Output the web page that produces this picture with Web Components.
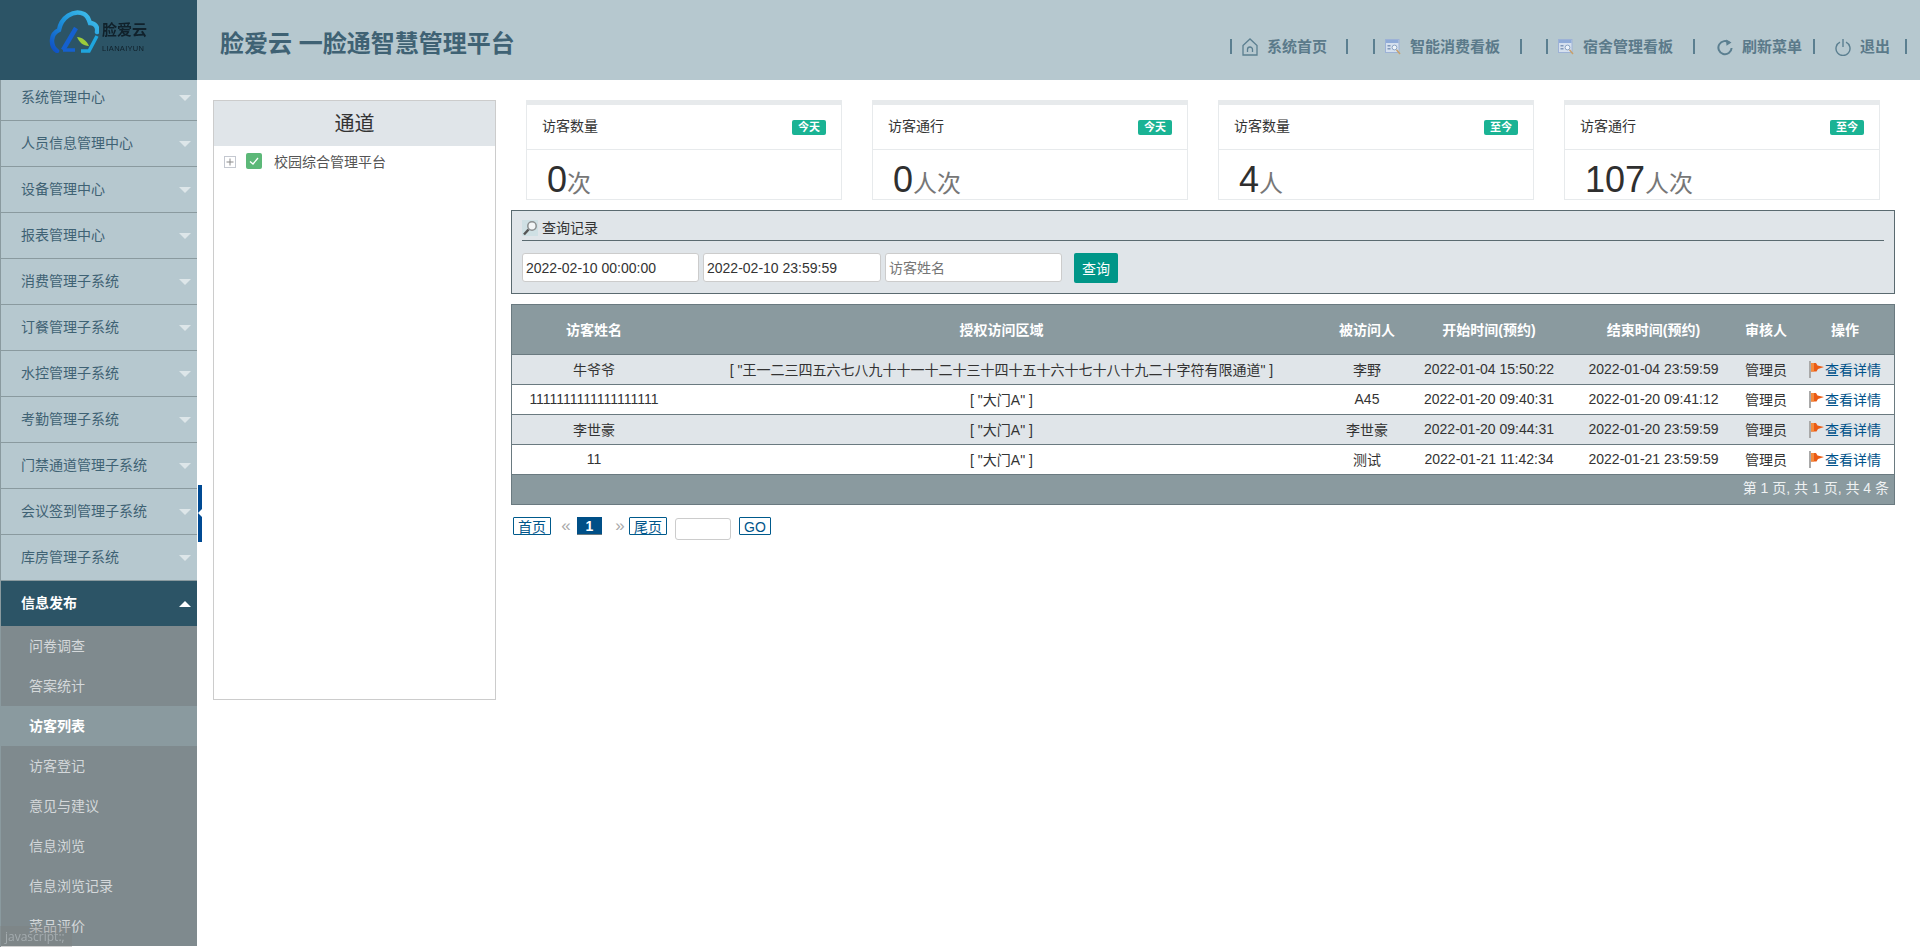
<!DOCTYPE html>
<html lang="zh-CN">
<head>
<meta charset="utf-8">
<title>脸爱云 一脸通智慧管理平台</title>
<style>
	html, body {
		margin: 0;
		height: 100%;
		overflow: hidden;
		background: #fff;
		font-family: "Liberation Sans", "Noto Sans CJK SC", sans-serif;
		font-size: 14px;
		color: #333;
	}
</style>
</head>
<body>
<app-shell>
	<app-header slot="header">
		<nav-link lead="0" tail="19">
			<svg slot="icon" width="16" height="18" viewBox="0 0 16 18" fill="none" stroke="#5b7f90" stroke-width="1.3"><path d="M1 7.500 8 1l7 6.500V17H1z"/><path d="M5.500 14v-2.500a2.500 2.500 0 0 1 5 0V14"/></svg>
			系统首页
		</nav-link>
		<nav-link lead="25" tail="20">
			<svg slot="icon" width="16" height="16" viewBox="0 0 16 16"><rect x="0.500" y="0.500" width="13.500" height="13" fill="#d5e0ee" stroke="#9db2d6"/><rect x="1" y="1" width="12.500" height="3" fill="#8fabd8"/><rect x="2.500" y="6" width="3" height="1.500" fill="#7f96b8"/><rect x="2.500" y="9" width="3" height="1.500" fill="#7f96b8"/><circle cx="9.500" cy="8.500" r="2.400" fill="#eef4fa" stroke="#8aa3c4"/><path d="M11.500 10.800 15 15" stroke="#c9a06a" stroke-width="1.500"/></svg>
			智能消费看板
		</nav-link>
		<nav-link lead="24" tail="20">
			<svg slot="icon" width="16" height="16" viewBox="0 0 16 16"><rect x="0.500" y="0.500" width="13.500" height="13" fill="#d5e0ee" stroke="#9db2d6"/><rect x="1" y="1" width="12.500" height="3" fill="#8fabd8"/><rect x="2.500" y="6" width="3" height="1.500" fill="#7f96b8"/><rect x="2.500" y="9" width="3" height="1.500" fill="#7f96b8"/><circle cx="9.500" cy="8.500" r="2.400" fill="#eef4fa" stroke="#8aa3c4"/><path d="M11.500 10.800 15 15" stroke="#c9a06a" stroke-width="1.500"/></svg>
			宿舍管理看板
		</nav-link>
		<nav-link lead="12" tail="11" nosep>
			<svg slot="icon" width="16" height="18" viewBox="0 0 16 18" fill="none" stroke="#5b7f90" stroke-width="2"><path d="M12.500 4.800A6.600 6.600 0 1 0 14.600 10"/><path d="M9 1.500l5.500 3-5 3.200z" fill="#5b7f90" stroke="none"/></svg>
			刷新菜单
		</nav-link>
		<nav-link lead="10" tail="15" nosep>
			<svg slot="icon" width="16" height="18" viewBox="0 0 16 18" fill="none" stroke="#5b7f90" stroke-width="1.400"><path d="M5 4.200A7 7 0 1 0 11 4.200"/><path d="M8 1v8"/></svg>
			退出
		</nav-link>
	</app-header>

	<side-menu slot="side">
		<menu-item>系统管理中心</menu-item>
		<menu-item>人员信息管理中心</menu-item>
		<menu-item>设备管理中心</menu-item>
		<menu-item>报表管理中心</menu-item>
		<menu-item>消费管理子系统</menu-item>
		<menu-item>订餐管理子系统</menu-item>
		<menu-item>水控管理子系统</menu-item>
		<menu-item>考勤管理子系统</menu-item>
		<menu-item>门禁通道管理子系统</menu-item>
		<menu-item>会议签到管理子系统</menu-item>
		<menu-item>库房管理子系统</menu-item>
		<menu-item open>信息发布</menu-item>
		<sub-item>问卷调查</sub-item>
		<sub-item>答案统计</sub-item>
		<sub-item active>访客列表</sub-item>
		<sub-item>访客登记</sub-item>
		<sub-item>意见与建议</sub-item>
		<sub-item>信息浏览</sub-item>
		<sub-item>信息浏览记录</sub-item>
		<sub-item>菜品评价</sub-item>
	</side-menu>

	<tree-panel slot="tree" heading="通道">校园综合管理平台</tree-panel>

	<stat-row slot="main">
		<stat-card label="访客数量" tag="今天" value="0" unit="次"></stat-card>
		<stat-card label="访客通行" tag="今天" value="0" unit="人次"></stat-card>
		<stat-card label="访客数量" tag="至今" value="4" unit="人"></stat-card>
		<stat-card label="访客通行" tag="至今" value="107" unit="人次"></stat-card>
	</stat-row>
	<query-panel slot="main"></query-panel>
	<visitor-table slot="main"></visitor-table>
	<page-bar slot="main"></page-bar>
</app-shell>
<link-tip>javascript:;</link-tip>

<script>
class AppShell extends HTMLElement {
	constructor() {
		super();
		this.attachShadow({ mode: 'open' });
		this.shadowRoot.innerHTML = `
			<style>
				:host {
					display: flex;
					flex-direction: column;
					height: 947px;
					overflow: hidden;
				}
				.body {
					display: flex;
					flex: 1;
					min-height: 0;
					position: relative;
				}
				.tree-col {
					margin: 20px 0 0 16px;
					flex: none;
				}
				.main-col {
					margin: 20px 25px 0 15px;
					flex: 1;
					min-width: 0;
					display: flex;
					flex-direction: column;
				}
				.handle {
					position: absolute;
					left: 198px;
					top: 405px;
					width: 4px;
					height: 57px;
					background: #004a93;
				}
				.handle::after {
					content: '';
					position: absolute;
					left: 0;
					top: 24px;
					border: 4px solid transparent;
					border-left: 0;
					border-right: 4px solid #fff;
				}
			</style>
			<slot name="header"></slot>
			<div class="body">
				<slot name="side"></slot>
				<div class="handle"></div>
				<div class="tree-col"><slot name="tree"></slot></div>
				<div class="main-col"><slot name="main"></slot></div>
			</div>
		`;
	}
}

class AppHeader extends HTMLElement {
	constructor() {
		super();
		this.attachShadow({ mode: 'open' });
		this.shadowRoot.innerHTML = `
			<style>
				:host {
					display: flex;
					flex: none;
					height: 80px;
					background: #b6c8cf;
				}
				.logo {
					width: 197px;
					flex: none;
					background: #2c5466;
					display: flex;
					align-items: flex-start;
					padding: 10px 0 0 49px;
					box-sizing: border-box;
				}
				.logo-text {
					margin: 11px 0 0 3px;
					color: #10212b;
					display: flex;
					flex-direction: column;
					filter: blur(.3px);
				}
				.logo-name {
					font-size: 15px;
					line-height: 17px;
					font-weight: 700;
				}
				.logo-en {
					font-size: 7.500px;
					line-height: 8px;
					margin-top: 7px;
					letter-spacing: .3px;
				}
				h1 {
					margin: 0 0 0 23px;
					font-size: 24px;
					font-weight: 700;
					line-height: 88px;
					color: #3f6274;
				}
				nav {
					margin-left: auto;
					padding: 39px 13px 0 0;
					display: flex;
					align-items: flex-start;
					height: 15px;
				}
			</style>
			<div class="logo">
				<svg width="50" height="43" viewBox="0 0 50 43" fill="none">
					<defs>
						<linearGradient id="cloud" x1="0" y1="1" x2="1" y2="0">
							<stop offset="0" stop-color="#0f4fc4"/>
							<stop offset=".55" stop-color="#1f96dc"/>
							<stop offset="1" stop-color="#46c6ee"/>
						</linearGradient>
					</defs>
					<path d="M8 41C1 36 1 24 10 20 12 8 24-1 35 4c4 2 5 6 6 9 5 0 8 4 7 9" stroke="url(#cloud)" stroke-width="4.500" stroke-linecap="round"/>
					<path d="M14 40 27 18" stroke="#1560cf" stroke-width="4.500"/>
					<path d="M14 40H26" stroke="#1560cf" stroke-width="3.500"/>
					<path d="M28 27c5 0 10 4 12 9-6 0-10-4-12-9z" fill="#9ccb3b"/>
					<path d="M48 26 40 41H32" stroke="#1fa5de" stroke-width="3.500"/>
				</svg>
				<div class="logo-text">
					<span class="logo-name">脸爱云</span>
					<span class="logo-en">LIANAIYUN</span>
				</div>
			</div>
			<h1>脸爱云 一脸通智慧管理平台</h1>
			<nav><slot></slot></nav>
		`;
	}
}

class NavLink extends HTMLElement {
	constructor() {
		super();
		this.attachShadow({ mode: 'open' });
		const nosep = this.hasAttribute('nosep');
		this.shadowRoot.innerHTML = `
			<style>
				:host {
					display: flex;
					align-items: center;
					height: 15px;
					color: #5b7a8a;
					font-size: 15px;
					font-weight: 700;
					white-space: nowrap;
				}
				.sep {
					width: 2px;
					height: 15px;
					background: #5b7f90;
					flex: none;
				}
				.icon {
					display: flex;
					width: 16px;
					margin: 0 9px 0 10px;
				}
				.icon ::slotted(svg) {
					flex: none;
				}
				.label {
					margin-bottom: 2px;
				}
			</style>
			${nosep ? '' : '<span class="sep"></span>'}
			<span class="icon"><slot name="icon"></slot></span>
			<span class="label"><slot></slot></span>
			<span class="sep end"></span>
		`;
		this.style.marginLeft = this.getAttribute('lead') + 'px';
		this.shadowRoot.querySelector('.end').style.marginLeft = this.getAttribute('tail') + 'px';
	}
}

class SideMenu extends HTMLElement {
	constructor() {
		super();
		this.attachShadow({ mode: 'open' });
		this.shadowRoot.innerHTML = `
			<style>
				:host {
					display: block;
					flex: none;
					width: 197px;
					box-sizing: border-box;
					border-left: 1px solid #8a9a9f;
					overflow: hidden;
					height: 867px;
				}
				.list {
					margin-top: -5px;
				}
			</style>
			<div class="list"><slot></slot></div>
		`;
	}
}

class MenuItem extends HTMLElement {
	constructor() {
		super();
		this.attachShadow({ mode: 'open' });
		this.shadowRoot.innerHTML = `
			<style>
				:host {
					display: flex;
					align-items: center;
					justify-content: space-between;
					height: 46px;
					box-sizing: border-box;
					padding: 0 6px 0 20px;
					background: #b6c8cf;
					border-bottom: 1px solid #8a9a9f;
					color: #3f6274;
					font-size: 14px;
				}
				:host([open]) {
					background: #2c5466;
					border-bottom: 0;
					height: 45px;
					color: #fff;
					font-weight: 700;
				}
				span {
					margin-bottom: 4px;
				}
				i {
					width: 0;
					height: 0;
					border: 6px solid transparent;
					border-bottom: 0;
					border-top: 6px solid #dde6e9;
				}
				:host([open]) i {
					border-top: 0;
					border-bottom: 6px solid #fff;
				}
			</style>
			<span><slot></slot></span>
			<i></i>
		`;
	}
}

class SubItem extends HTMLElement {
	constructor() {
		super();
		this.attachShadow({ mode: 'open' });
		this.shadowRoot.innerHTML = `
			<style>
				:host {
					display: flex;
					align-items: center;
					height: 40px;
					box-sizing: border-box;
					padding: 0 0 2px 28px;
					background: #7f8a8e;
					color: #d4d8da;
					font-size: 14px;
				}
				:host([active]) {
					background: #8a9a9f;
					color: #fff;
					font-weight: 700;
				}
			</style>
			<slot></slot>
		`;
	}
}

class TreePanel extends HTMLElement {
	constructor() {
		super();
		this.attachShadow({ mode: 'open' });
		this.shadowRoot.innerHTML = `
			<style>
				:host {
					display: block;
					width: 283px;
					height: 600px;
					box-sizing: border-box;
					border: 1px solid #ccc;
				}
				.title {
					height: 45px;
					line-height: 46px;
					text-align: center;
					font-size: 20px;
					color: #333;
					background: #e0e5e9;
				}
				.node {
					display: flex;
					align-items: center;
					margin-top: 7px;
					height: 16px;
					padding-left: 10px;
					color: #555;
					font-size: 14px;
				}
				.plus {
					width: 12px;
					height: 12px;
					margin-top: 2px;
				}
				.check {
					width: 16px;
					height: 16px;
					margin: 0 12px 0 10px;
				}
			</style>
			<div class="title">${this.getAttribute('heading')}</div>
			<div class="node">
				<svg class="plus" viewBox="0 0 12 12" fill="none"><rect x=".5" y=".5" width="11" height="11" stroke="#c4c8d0"/><path d="M2.500 6h7M6 2.500v7" stroke="#8a8a8a"/></svg>
				<svg class="check" viewBox="0 0 16 16"><rect width="16" height="16" rx="2" fill="#5cb878"/><path d="M4 8.500 7 11l5-6" fill="none" stroke="#fff" stroke-width="1.300"/></svg>
				<slot></slot>
			</div>
		`;
	}
}

class StatRow extends HTMLElement {
	constructor() {
		super();
		this.attachShadow({ mode: 'open' });
		this.shadowRoot.innerHTML = `
			<style>
				:host {
					display: grid;
					grid-template-columns: repeat(4, 1fr);
					column-gap: 30px;
					padding: 0 15px;
					margin-bottom: 10px;
				}
			</style>
			<slot></slot>
		`;
	}
}

class StatCard extends HTMLElement {
	constructor() {
		super();
		this.attachShadow({ mode: 'open' });
		this.shadowRoot.innerHTML = `
			<style>
				:host {
					display: block;
					height: 100px;
					box-sizing: border-box;
					border: 1px solid #e7eaec;
					border-top: 5px solid #e7eaec;
					color: #333;
				}
				.top {
					display: flex;
					justify-content: space-between;
					align-items: center;
					height: 45px;
					box-sizing: border-box;
					padding: 0 15px;
					border-bottom: 1px solid #e7eaec;
					font-size: 14px;
				}
				.top span:first-child {
					margin-bottom: 4px;
				}
				.tag {
					background: #1ab394;
					color: #fff;
					font-size: 11px;
					font-weight: 700;
					line-height: 15px;
					height: 15px;
					padding: 0 6px;
					border-radius: 2px;
				}
				.num {
					display: flex;
					align-items: baseline;
					padding: 12px 0 0 20px;
					line-height: 36px;
					font-size: 36px;
					color: #2f2f2f;
				}
				.unit {
					font-size: 24px;
					color: #777;
				}
			</style>
			<div class="top">
				<span>${this.getAttribute('label')}</span>
				<span class="tag">${this.getAttribute('tag')}</span>
			</div>
			<div class="num">${this.getAttribute('value')}<span class="unit">${this.getAttribute('unit')}</span></div>
		`;
	}
}

class QueryPanel extends HTMLElement {
	constructor() {
		super();
		this.attachShadow({ mode: 'open' });
		this.shadowRoot.innerHTML = `
			<style>
				:host {
					display: block;
					height: 84px;
					box-sizing: border-box;
					margin-bottom: 10px;
					padding: 0 10px;
					background: #e0e5e9;
					border: 1px solid #5a6a70;
				}
				.head {
					display: flex;
					align-items: center;
					gap: 4px;
					height: 30px;
					box-sizing: border-box;
					padding-top: 2px;
					border-bottom: 1px solid #5a6a70;
					font-size: 14px;
					color: #333;
				}
				.head svg {
					margin-top: 3px;
				}
				form {
					display: flex;
					align-items: flex-start;
					margin: 12px 0 0;
				}
				input {
					width: 177px;
					height: 29px;
					box-sizing: border-box;
					margin: 0 4px 0 0;
					padding: 0 3px;
					border: 1px solid #ccc;
					border-radius: 3px;
					background: #fff;
					font: 14px "Liberation Sans", "Noto Sans CJK SC", sans-serif;
					color: #333;
				}
				input:nth-child(2) {
					width: 178px;
				}
				button {
					width: 44px;
					height: 30px;
					margin-left: 8px;
					padding: 0;
					border: 0;
					border-radius: 2px;
					background: #009688;
					color: #fff;
					font: 14px "Liberation Sans", "Noto Sans CJK SC", sans-serif;
				}
			</style>
			<div class="head">
				<svg width="16" height="16" viewBox="0 0 16 16" fill="none"><rect width="16" height="16" fill="#cfe0e4"/><circle cx="10" cy="6" r="4.200" fill="#f3f6f7" stroke="#8b8f90" stroke-width="1.500"/><path d="M6.500 9.500 2 14.500" stroke="#555" stroke-width="2.500"/></svg>
				查询记录
			</div>
			<form>
				<input value="2022-02-10 00:00:00">
				<input value="2022-02-10 23:59:59">
				<input placeholder="访客姓名">
				<button type="button">查询</button>
			</form>
		`;
	}
}

const VISITORS = [
	['牛爷爷', '[ "王一二三四五六七八九十十一十二十三十四十五十六十七十八十九二十字符有限通道" ]', '李野', '2022-01-04 15:50:22', '2022-01-04 23:59:59', '管理员'],
	['1111111111111111111', '[ "大门A" ]', 'A45', '2022-01-20 09:40:31', '2022-01-20 09:41:12', '管理员'],
	['李世豪', '[ "大门A" ]', '李世豪', '2022-01-20 09:44:31', '2022-01-20 23:59:59', '管理员'],
	['11', '[ "大门A" ]', '测试', '2022-01-21 11:42:34', '2022-01-21 23:59:59', '管理员'],
];
const FLAG = '<svg width="16" height="17" viewBox="0 0 16 17"><rect width="2" height="17" fill="#a9a9a9"/><path d="M2 2h5l1.500 2.500L15 6l-6 2-1.500 2.500H2z" fill="#ea5a14"/><path d="M2 2h3v8.500H2z" fill="#f58a3c"/></svg>';

class VisitorTable extends HTMLElement {
	constructor() {
		super();
		this.attachShadow({ mode: 'open' });
		const head = ['访客姓名', '授权访问区域', '被访问人', '开始时间(预约)', '结束时间(预约)', '审核人', '操作'];
		const rows = VISITORS.map((row) => `
			<div class="row">
				${row.map((cell) => `<div>${cell}</div>`).join('')}
				<div class="act">${FLAG}<a>查看详情</a></div>
			</div>
		`).join('');
		this.shadowRoot.innerHTML = `
			<style>
				:host {
					display: block;
					border: 1px solid #6a7a80;
					font-size: 14px;
					color: #333;
				}
				.row, .head {
					display: grid;
					grid-template-columns: 164px 651px 80px 164px 165px 60px 98px;
					align-items: center;
					text-align: center;
					height: 30px;
					box-sizing: border-box;
					padding-bottom: 2px;
					border-bottom: 1px solid #6a7a80;
					white-space: nowrap;
				}
				.head {
					height: 50px;
					background: #8a9a9f;
					color: #fff;
					font-weight: 700;
				}
				.row:nth-child(odd) {
					background: #e0e5e9;
				}
				.row:nth-child(even) {
					background: #fff;
				}
				.act {
					display: flex;
					justify-content: center;
					align-items: center;
				}
				.act svg {
					margin-top: 2px;
				}
				a {
					color: #00528a;
				}
				.foot {
					height: 29px;
					line-height: 27px;
					padding-right: 5px;
					text-align: right;
					background: #8a9a9f;
					color: #eef1f2;
				}
			</style>
			<div class="head">${head.map((h) => `<div>${h}</div>`).join('')}</div>
			${rows}
			<div class="foot">第 1 页, 共 1 页, 共 4 条</div>
		`;
	}
}

class PageBar extends HTMLElement {
	constructor() {
		super();
		this.attachShadow({ mode: 'open' });
		this.shadowRoot.innerHTML = `
			<style>
				:host {
					display: flex;
					align-items: flex-start;
					margin: 12px 0 0 2px;
					font-size: 14px;
				}
				.btn {
					height: 18px;
					line-height: 19px;
					box-sizing: border-box;
					padding: 0 4px;
					border: 1px solid #005a8c;
					border-radius: 1px;
					color: #00558a;
					overflow: hidden;
				}
				.arrow {
					color: #aaa;
					width: 14px;
					font-size: 17px;
					line-height: 17px;
					text-align: center;
				}
				.cur {
					width: 25px;
					height: 18px;
					line-height: 19px;
					box-sizing: border-box;
					margin: 0 11px 0 4px;
					text-align: center;
					background: #004f87;
					border-bottom: 1px solid #6a7a80;
					color: #fff;
					font-weight: 700;
				}
				input {
					width: 56px;
					height: 22px;
					box-sizing: border-box;
					margin: 1px 8px 0 8px;
					border: 1px solid #ccc;
					border-radius: 3px;
					padding: 0;
				}
			</style>
			<span class="btn" style="margin-right:8px">首页</span>
			<span class="arrow">«</span>
			<span class="cur">1</span>
			<span class="arrow" style="margin-right:2px">»</span>
			<span class="btn">尾页</span>
			<input>
			<span class="btn">GO</span>
		`;
	}
}

class LinkTip extends HTMLElement {
	constructor() {
		super();
		this.attachShadow({ mode: 'open' });
		this.shadowRoot.innerHTML = `
			<style>
				:host {
					position: fixed;
					left: 0;
					bottom: 0;
					width: 72px;
					height: 21px;
					padding-left: 5px;
					box-sizing: border-box;
					background: rgba(125, 125, 125, .35);
					color: #a4acaf;
					font: 12px/21px "Open Sans", sans-serif;
				}
			</style>
			<slot></slot>
		`;
	}
}

customElements.define('app-shell', AppShell);
customElements.define('app-header', AppHeader);
customElements.define('nav-link', NavLink);
customElements.define('side-menu', SideMenu);
customElements.define('menu-item', MenuItem);
customElements.define('sub-item', SubItem);
customElements.define('tree-panel', TreePanel);
customElements.define('stat-row', StatRow);
customElements.define('stat-card', StatCard);
customElements.define('query-panel', QueryPanel);
customElements.define('visitor-table', VisitorTable);
customElements.define('page-bar', PageBar);
customElements.define('link-tip', LinkTip);
</script>
</body>
</html>
